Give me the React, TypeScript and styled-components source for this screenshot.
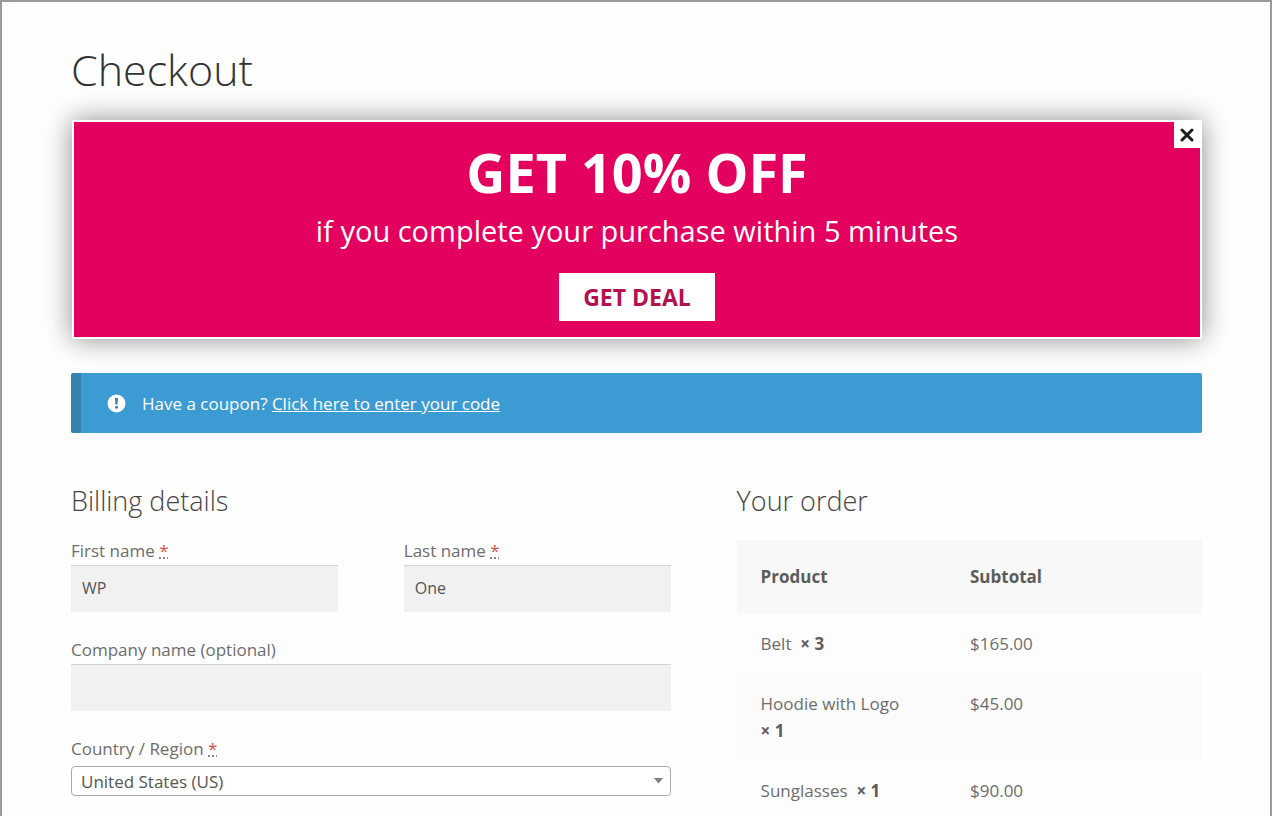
import React from "react";
import styled, { createGlobalStyle } from "styled-components";

const GlobalStyle = createGlobalStyle`
  *, *::before, *::after { box-sizing: border-box; }
  body {
    margin: 0;
    background: #fefefe;
    color: #6d6d6d;
    font: 400 17px/27px "Open Sans", "Liberation Sans", sans-serif;
  }
  h1, h2, p { margin: 0; }
  button, input, select { font: inherit; }
`;

const Page = styled.div`
  min-height: 100vh;
  border: 2px solid #9c9a9a;
  border-bottom: 0;
  padding: 38px 68px 0 69px;
`;

const PageTitle = styled.h1`
  color: #333;
  font-size: 43px;
  font-weight: 300;
  line-height: 60px;
`;

const Banner = styled.section`
  position: relative;
  display: flex;
  flex-direction: column;
  align-items: center;
  margin: 20px 0 0 1px;
  padding: 16px 32px;
  border: 2px solid #fff;
  background: #e4005f;
  box-shadow: 0 0 26px rgba(0, 0, 0, 0.45);
  color: #fff;
  text-align: center;
`;

const BannerTitle = styled.h2`
  font-size: 54px;
  font-weight: 700;
  line-height: 68px;
`;

const BannerText = styled.p`
  font-size: 29px;
  line-height: 50px;
`;

const DealButton = styled.button`
  height: 48px;
  margin-top: 17px;
  padding: 0 24px;
  border: 0;
  background: #fff;
  color: #b5114f;
  font-size: 23px;
  font-weight: 700;
  cursor: pointer;
`;

const CloseButton = styled.button`
  position: absolute;
  top: 0;
  right: 0;
  display: grid;
  place-items: center;
  width: 26px;
  height: 26px;
  padding: 0;
  border: 0;
  background: #fff;
  cursor: pointer;
`;

const CouponNotice = styled.aside`
  display: flex;
  align-items: center;
  gap: 16px;
  min-height: 60px;
  margin-top: 34px;
  padding: 0 26px;
  border-left: 10px solid #3583ae;
  border-radius: 2px;
  background: #3d9bd3;
  color: #fff;
`;

const CouponLink = styled.a`
  color: inherit;
  text-decoration: underline;
`;

const Columns = styled.main`
  display: grid;
  grid-template-columns: 599fr 465fr;
  gap: 66px;
  margin-top: 48px;
`;

const SectionTitle = styled.h2`
  margin-bottom: 16px;
  color: #444;
  font-size: 27px;
  font-weight: 300;
  line-height: 40px;
`;

const Fields = styled.form`
  display: grid;
  grid-template-columns: 1fr 1fr;
  gap: 24px 66px;
`;

const Field = styled.div<{ $wide?: boolean }>`
  display: flex;
  flex-direction: column;
  min-width: 0;
  grid-column: ${({ $wide }) => ($wide ? "1 / -1" : "auto")};
`;

const Required = styled.abbr`
  color: #c9544f;
  text-decoration: underline dotted #8c6a68;
`;

const TextInput = styled.input`
  width: 100%;
  height: 47px;
  margin-top: 1px;
  padding: 0 11px 2px;
  border: 0;
  border-top: 1px solid #d2d2d2;
  border-radius: 0;
  background: #f1f1f1;
  color: #555;
  font-size: 16px;
`;

const SelectWrap = styled.div`
  position: relative;
  margin-top: 4px;
`;

const Select = styled.select`
  display: block;
  width: 100%;
  height: 30px;
  padding: 0 28px 0 9px;
  border: 1px solid #aaa;
  border-radius: 4px;
  background: #fff;
  color: #555;
  appearance: none;
`;

const SelectArrow = styled.svg`
  position: absolute;
  top: 12px;
  right: 8px;
  pointer-events: none;
`;

const OrderTable = styled.table`
  width: 100%;
  margin-top: 19px;
  border-collapse: collapse;
  table-layout: fixed;
  text-align: left;
`;

const OrderTitle = styled(SectionTitle)`
  margin-bottom: 0;
`;

const HeadCell = styled.th`
  padding: 23px 24px;
  background: #f8f8f8;
  color: #5c5c5c;
  font-weight: 700;

  &:first-child { width: 45%; }
`;

const OrderRow = styled.tr`
  background: #fdfdfd;

  &:nth-child(even) { background: #fbfbfb; }
`;

const Cell = styled.td`
  padding: 17px 24px 16px;
  vertical-align: top;
`;

const Quantity = styled.strong`
  white-space: nowrap;
  color: #5c5c5c;
`;

const items = [
  { name: "Belt", quantity: 3, subtotal: "$165.00" },
  { name: "Hoodie with Logo", quantity: 1, subtotal: "$45.00" },
  { name: "Sunglasses", quantity: 1, subtotal: "$90.00" },
];

export default function App() {
  return (
    <>
      <GlobalStyle />
      <Page>
        <PageTitle>Checkout</PageTitle>

        <Banner>
          <BannerTitle>GET 10% OFF</BannerTitle>
          <BannerText>if you complete your purchase within 5 minutes</BannerText>
          <DealButton type="button">GET DEAL</DealButton>
          <CloseButton type="button" aria-label="Close">
            <svg width="14" height="14" viewBox="0 0 14 14" aria-hidden="true">
              <path d="M2 2L12 12M12 2L2 12" stroke="#1c1c1c" strokeWidth="3" strokeLinecap="round" />
            </svg>
          </CloseButton>
        </Banner>

        <CouponNotice>
          <svg width="19" height="19" viewBox="0 0 19 19" aria-hidden="true">
            <circle cx="9.5" cy="9.5" r="9" fill="#fff" />
            <path d="M8 4H11L10.5 10.6H8.5Z" fill="#3f7fa8" />
            <circle cx="9.5" cy="13.2" r="1.5" fill="#3f7fa8" />
          </svg>
          <p>
            Have a coupon? <CouponLink href="#coupon">Click here to enter your code</CouponLink>
          </p>
        </CouponNotice>

        <Columns>
          <section>
            <SectionTitle>Billing details</SectionTitle>
            <Fields>
              <Field>
                <label htmlFor="first-name">
                  First name <Required title="required">*</Required>
                </label>
                <TextInput id="first-name" type="text" defaultValue="WP" />
              </Field>
              <Field>
                <label htmlFor="last-name">
                  Last name <Required title="required">*</Required>
                </label>
                <TextInput id="last-name" type="text" defaultValue="One" />
              </Field>
              <Field $wide>
                <label htmlFor="company">Company name (optional)</label>
                <TextInput id="company" type="text" />
              </Field>
              <Field $wide>
                <label htmlFor="country">
                  Country / Region <Required title="required">*</Required>
                </label>
                <SelectWrap>
                  <Select id="country" defaultValue="US">
                    <option value="US">United States (US)</option>
                  </Select>
                  <SelectArrow width="9" height="6" viewBox="0 0 9 6" aria-hidden="true">
                    <path d="M0 0H9L4.5 5.5Z" fill="#808080" />
                  </SelectArrow>
                </SelectWrap>
              </Field>
            </Fields>
          </section>

          <section>
            <OrderTitle>Your order</OrderTitle>
            <OrderTable>
              <thead>
                <tr>
                  <HeadCell scope="col">Product</HeadCell>
                  <HeadCell scope="col">Subtotal</HeadCell>
                </tr>
              </thead>
              <tbody>
                {items.map((item) => (
                  <OrderRow key={item.name}>
                    <Cell>
                      {item.name}&nbsp; <Quantity>× {item.quantity}</Quantity>
                    </Cell>
                    <Cell>{item.subtotal}</Cell>
                  </OrderRow>
                ))}
              </tbody>
            </OrderTable>
          </section>
        </Columns>
      </Page>
    </>
  );
}
